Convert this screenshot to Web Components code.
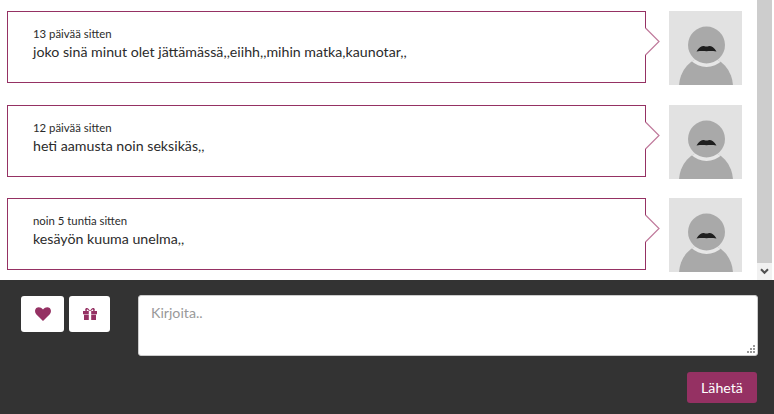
<!DOCTYPE html>
<html>
<head>
<meta charset="utf-8">
<style>
html,body{margin:0;padding:0;background:#fff;}
body{font-family:"Lato",sans-serif;color:#333;width:774px;height:414px;overflow:hidden;}
</style>
</head>
<body>
<chat-app>
  <chat-message slot="messages" time="13 päivää sitten">joko sinä minut olet jättämässä,,eiihh,,mihin matka,kaunotar,,</chat-message>
  <chat-message slot="messages" time="12 päivää sitten">heti aamusta noin seksikäs,,</chat-message>
  <chat-message slot="messages" time="noin 5 tuntia sitten">kesäyön kuuma unelma,,</chat-message>
  <chat-composer slot="composer"></chat-composer>
</chat-app>
<script>
class ChatApp extends HTMLElement {
    constructor() {
        super();
        this.attachShadow({ mode: 'open' });
        this.shadowRoot.innerHTML = `
<style>
:host{display:flex;flex-direction:column;width:774px;height:414px;}
.top{display:flex;height:280px;overflow:hidden;}
.list{flex:1;display:flex;flex-direction:column;gap:19.5px;padding:11px 15px 0 7px;overflow:hidden;}
.bar{width:15px;margin-right:2px;background:#f1f1f1;display:flex;flex-direction:column;}
.thumb{flex:1;background:#cdcdcd;}
.arrow{height:17px;display:flex;align-items:center;justify-content:center;}
</style>
<div class="top">
  <div class="list"><slot name="messages"></slot></div>
  <div class="bar">
    <div class="thumb"></div>
    <div class="arrow"><svg width="9" height="7" viewBox="0 0 9 7"><path d="M1 1.2 L4.5 4.8 L8 1.2" fill="none" stroke="#505050" stroke-width="2"/></svg></div>
  </div>
</div>
<slot name="composer"></slot>`;
    }
}
customElements.define('chat-app', ChatApp);

class UserAvatar extends HTMLElement {
    constructor() {
        super();
        this.attachShadow({ mode: 'open' });
        this.shadowRoot.innerHTML = `
<style>
:host{display:block;width:73px;height:74px;flex:none;}
svg{display:block;}
</style>
<svg width="73" height="74" viewBox="0 0 73 74">
  <defs><clipPath id="body"><ellipse cx="37" cy="76" rx="27" ry="30"/></clipPath></defs>
  <rect width="73" height="74" fill="#e2e2e2"/>
  <ellipse cx="37" cy="76" rx="27" ry="30" fill="#a9a9a9"/>
  <circle cx="37.500" cy="34" r="22" fill="#e7e7e7" clip-path="url(#body)"/>
  <circle cx="37.500" cy="34" r="18.500" fill="#a9a9a9"/>
  <path d="M27.500 40.500 C30 36.500 33 34.700 35.500 35.200 C36.800 35.600 38 35.600 39.500 35.200 C42 34.700 45 36.500 47.500 40.500 C43 39.800 40 40 37.500 40.200 C35 40 32 39.800 27.500 40.500 Z" fill="#1e1e1e"/>
</svg>`;
    }
}
customElements.define('user-avatar', UserAvatar);

class ChatMessage extends HTMLElement {
    constructor() {
        super();
        this.attachShadow({ mode: 'open' });
        this.shadowRoot.innerHTML = `
<style>
:host{display:flex;align-items:flex-start;}
.bubble{position:relative;box-sizing:border-box;width:639px;height:72px;border:1px solid #953163;background:#fff;padding:15px 25px 0 25px;}
.tail{position:absolute;left:637px;top:15px;}
.time{font-size:11.36px;line-height:14px;color:#2b2b2b;}
.text{font-size:14.2px;line-height:20px;margin-top:1px;color:#2b2b2b;}
user-avatar{margin-left:23px;}
</style>
<div class="bubble">
  <div class="time"></div>
  <div class="text"><slot></slot></div>
  <svg class="tail" width="16" height="30" viewBox="0 0 16 30"><rect x="0" y="1.500" width="1.500" height="26" fill="#fff"/><path d="M.5 1 L14 14.500 L.5 28" fill="#fff" stroke="#c07a9c" stroke-width="1.200"/></svg>
</div>
<user-avatar></user-avatar>`;
        this.shadowRoot.querySelector('.time').textContent = this.getAttribute('time');
    }
}
customElements.define('chat-message', ChatMessage);

class IconButton extends HTMLElement {
    constructor() {
        super();
        this.attachShadow({ mode: 'open' });
        this.shadowRoot.innerHTML = `
<style>
:host{display:flex;align-items:center;justify-content:center;box-sizing:border-box;height:36px;background:#fff;border-radius:3px;cursor:pointer;}
</style>
<slot></slot>`;
    }
}
customElements.define('icon-button', IconButton);

class ChatComposer extends HTMLElement {
    constructor() {
        super();
        this.attachShadow({ mode: 'open' });
        this.shadowRoot.innerHTML = `
<style>
:host{display:block;box-sizing:border-box;height:134px;background:#333;padding:15px 16px 0 21px;}
.row{display:flex;align-items:flex-start;}
.btns{display:flex;gap:5px;width:117px;flex:none;margin-top:1px;}
.like{width:43px;}
.gift{width:41px;}
.input{position:relative;flex:1;box-sizing:border-box;height:61px;background:#fff;border:1px solid #ccc;border-radius:3px;padding:7px 12px;font-size:14.2px;line-height:20px;color:#999;}
.grip{position:absolute;right:2px;bottom:2px;}
.foot{display:flex;justify-content:flex-end;margin:16px 1px 0 0;}
.send{box-sizing:border-box;width:70px;height:31px;background:#953163;color:#fff;border-radius:3px;font-size:14.2px;line-height:31px;text-align:center;}
</style>
<div class="row">
  <div class="btns">
    <icon-button class="like"><svg width="16" height="14" viewBox="0 0 16 14"><path d="M8 14 L1.200 7.200 C-.400 5.400 -.300 2.600 1.300 1.100 C3 -.400 5.800 -.300 8 2.400 C10.200 -.300 13 -.400 14.700 1.100 C16.300 2.600 16.400 5.400 14.800 7.200 Z" fill="#953163"/></svg></icon-button>
    <icon-button class="gift"><svg width="14" height="12" viewBox="0 0 14 12"><path fill="#953163" fill-rule="evenodd" d="M0 3 H14 V6.300 H8.200 V3 H5.800 V6.300 H0 Z M1 6.700 H5.800 V12 H1 Z M8.200 6.700 H13 V12 H8.200 Z M2.500 3 C1.500 1 3 -.500 4.700 .300 C5.800 .800 6.500 2 7 3 C7.500 2 8.200 .800 9.300 .300 C11 -.500 12.500 1 11.500 3 H10 C10.700 2 10.200 1.200 9.400 1.500 C8.800 1.800 8.300 2.400 8 3 H6 C5.700 2.400 5.200 1.800 4.600 1.500 C3.800 1.200 3.300 2 4 3 Z"/></svg></icon-button>
  </div>
  <div class="input">Kirjoita..
    <svg class="grip" width="8" height="8" viewBox="0 0 8 8" fill="#999"><rect x="6" y="0" width="2" height="2"/><rect x="3" y="3" width="2" height="2"/><rect x="6" y="3" width="2" height="2"/><rect x="0" y="6" width="2" height="2"/><rect x="3" y="6" width="2" height="2"/><rect x="6" y="6" width="2" height="2"/></svg>
  </div>
</div>
<div class="foot"><div class="send">Lähetä</div></div>`;
    }
}
customElements.define('chat-composer', ChatComposer);
</script>
</body>
</html>
